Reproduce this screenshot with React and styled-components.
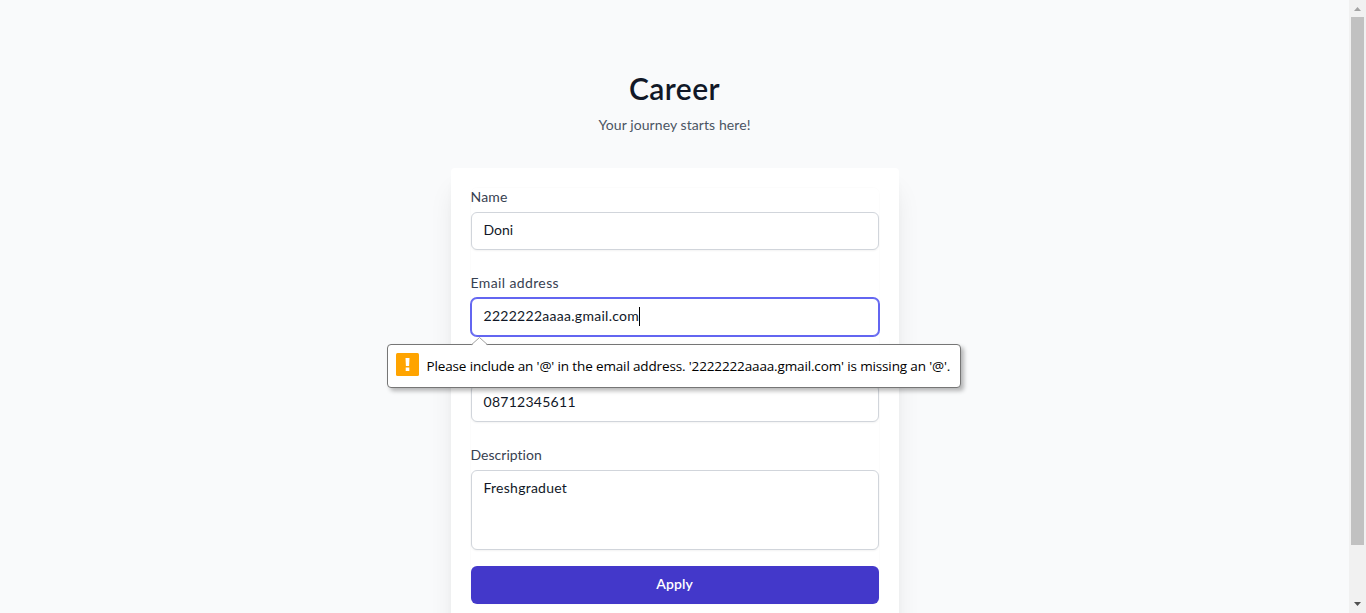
import React from "react";
import styled, { createGlobalStyle } from "styled-components";

const Global = createGlobalStyle`
  *, *::before, *::after { box-sizing: border-box; }
  html, body { margin: 0; padding: 0; height: 100%; overflow: hidden; }
  body {
    background: #f9fafb;
    font-family: Lato, "Open Sans", sans-serif;
    font-size: 14px;
    line-height: 20px;
    font-variant-ligatures: none;
  }
`;

const Shell = styled.div`
  display: flex;
  height: 613px;
  overflow: hidden;
`;

const Page = styled.main`
  flex: 1;
  display: flex;
  flex-direction: column;
  align-items: center;
  padding-top: 70px;
  background: #f9fafb;
`;

const Title = styled.h1`
  margin: 0;
  color: #111827;
  font-size: 30px;
  line-height: 36px;
  font-weight: 600;
  letter-spacing: ${(p) => p.$track || 0}px;
`;

const Subtitle = styled.p`
  margin: 9px 0 33px;
  color: #4b5563;
  letter-spacing: ${(p) => p.$track || 0}px;
`;

const Card = styled.section`
  width: 448px;
  height: 480px;
  flex: none;
  padding: 20px;
  background: #fff;
  border-radius: 4px;
  box-shadow: 0 20px 25px -5px rgba(0, 0, 0, 0.1), 0 8px 10px -6px rgba(0, 0, 0, 0.1);
`;

const Form = styled.form`
  display: flex;
  flex-direction: column;
  gap: 24px;
  border-radius: 6px;
  box-shadow: 0 0 0 1px rgba(0, 0, 0, 0.01);
`;

const Field = styled.div`
  position: relative;
  display: flex;
  flex-direction: column;
  gap: 4px;
`;

const Label = styled.label`
  height: 20px;
  line-height: 18px;
  color: #374151;
  letter-spacing: ${(p) => p.$track || 0}px;
`;

const Control = styled.div`
  display: flex;
  align-items: flex-start;
  height: ${(p) => (p.$tall ? 80 : 38)}px;
  padding: 8px 12px;
  line-height: 18px;
  color: #111827;
  background: #fff;
  border: 1px solid ${(p) => (p.$focused ? "#6366f1" : "#d1d5db")};
  border-radius: 6px;
  box-shadow: ${(p) => (p.$focused ? "0 0 0 1px #6366f1" : "0 1px 2px rgba(0, 0, 0, 0.05)")};
  letter-spacing: ${(p) => p.$track || 0}px;
`;

const Caret = styled.span`
  width: 1px;
  height: 19px;
  background: #000;
`;

const Button = styled.button`
  height: 38px;
  margin: -8px 0 0;
  padding: 0 0 2px;
  border: 0;
  border-radius: 6px;
  background: #4338ca;
  color: #fff;
  font: 600 14px/20px Lato, sans-serif;
  letter-spacing: ${(p) => p.$track || 0}px;
`;

const Tooltip = styled.div`
  position: absolute;
  z-index: 2;
  top: 70px;
  left: -84px;
  width: 574px;
  height: 44px;
  display: flex;
  align-items: center;
  gap: 8px;
  padding: 0 8px 3px;
  border: 1px solid #767676;
  border-radius: 4px;
  background: #fff;
  box-shadow: 3px 3px 4px rgba(0, 0, 0, 0.28);
  color: #000;
  font-family: "Open Sans", sans-serif;
  font-size: 13.5px;
  white-space: nowrap;
  letter-spacing: ${(p) => p.$track || 0}px;
`;

const Pointer = styled.svg`
  position: absolute;
  top: -8px;
  left: 83px;
`;

const WarningIcon = styled.svg`
  flex: none;
`;

const Message = styled.span`
  padding-top: 3px;
`;

const Scrollbar = styled.aside`
  width: 17px;
  display: flex;
  flex-direction: column;
  align-items: center;
  background: #f1f1f1;
`;

const Thumb = styled.div`
  width: 13px;
  height: 528px;
  background: #c1c1c1;
`;

const Arrow = styled.svg`
  display: block;
  margin-top: ${(p) => (p.$down ? "51px" : 0)};
`;

export default function App() {
  return (
    <Shell>
      <Global />
      <Page>
        <Title $track={0.45}>Career</Title>
        <Subtitle $track={0.08}>Your journey starts here!</Subtitle>
        <Card>
          <Form>
            <Field>
              <Label $track={0.2}>Name</Label>
              <Control>Doni</Control>
            </Field>
            <Field>
              <Label $track={0.38}>Email address</Label>
              <Control $focused $track={0.28}>
                2222222aaaa.gmail.com
                <Caret />
              </Control>
              <Tooltip $track={-0.14}>
                <Pointer width="18" height="9" viewBox="0 0 18 9">
                  <path d="M0.5 8.5 8.5 .5l8 8V9H.5z" fill="#fff" />
                  <path d="M.5 7.7 8.5.5l8 7.2" fill="none" stroke="#a0a0a0" />
                </Pointer>
                <WarningIcon width="23" height="23" viewBox="0 0 23 23">
                  <rect width="23" height="23" rx="1.5" fill="#ffa400" />
                  <path d="M9.5 5h4l-.4 8h-3.2zM9.7 14.5h3.6V18H9.7z" fill="#fff" />
                </WarningIcon>
                <Message>Please include an '@' in the email address. '2222222aaaa.gmail.com' is missing an '@'.</Message>
              </Tooltip>
            </Field>
            <Field>
              <Label />
              <Control $track={0.27}>08712345611</Control>
            </Field>
            <Field>
              <Label $track={0.02}>Description</Label>
              <Control $tall $track={0.25}>Freshgraduet</Control>
            </Field>
            <Button type="button" $track={0.1}>Apply</Button>
          </Form>
        </Card>
      </Page>
      <Scrollbar>
        <Arrow width="17" height="17" viewBox="0 0 17 17">
          <path d="M5 11h7L8.5 7z" fill="#a3a3a3" />
        </Arrow>
        <Thumb />
        <Arrow $down width="17" height="17" viewBox="0 0 17 17">
          <path d="M5 6h7l-3.5 4z" fill="#505050" />
        </Arrow>
      </Scrollbar>
    </Shell>
  );
}
